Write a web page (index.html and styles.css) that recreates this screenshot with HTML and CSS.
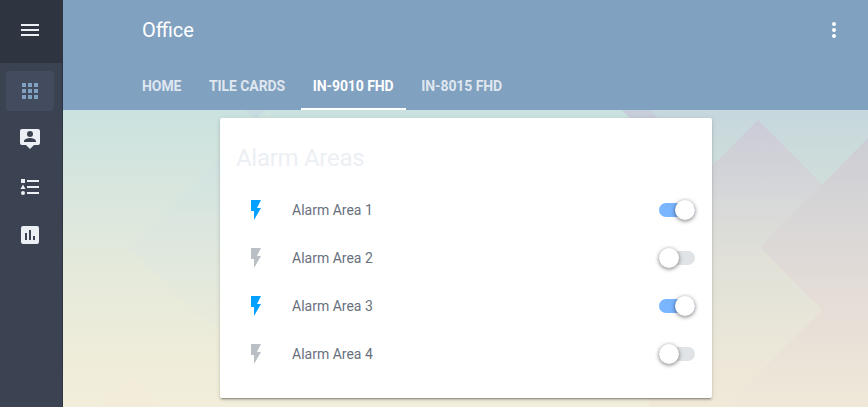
FILE: index.html
```html
<!DOCTYPE html>
<html lang="en">
<head>
<meta charset="utf-8">
<title>Office</title>
<link rel="stylesheet" href="styles.css">
</head>
<body>
<div class="app">
  <nav class="sidebar">
    <div class="menu"><svg class="icon" viewBox="0 0 24 24"><path d="M3 6h18v2H3zm0 5h18v2H3zm0 5h18v2H3z"/></svg></div>
    <div class="links">
      <a class="link selected"><svg class="icon" viewBox="0 0 24 24"><path d="M4 4h4v4H4zm6 0h4v4h-4zm6 0h4v4h-4zM4 10h4v4H4zm6 0h4v4h-4zm6 0h4v4h-4zM4 16h4v4H4zm6 0h4v4h-4zm6 0h4v4h-4z"/></svg></a>
      <a class="link"><svg class="icon" viewBox="0 0 24 24"><path d="M4 2h16a2 2 0 0 1 2 2v12a2 2 0 0 1-2 2h-4l-4 4-4-4H4a2 2 0 0 1-2-2V4c0-1.100.9-2 2-2m14 13v-1c0-2-4-3.100-6-3.100S6 12 6 14v1h12M12 4a3 3 0 0 0-3 3 3 3 0 0 0 3 3 3 3 0 0 0 3-3 3 3 0 0 0-3-3z"/></svg></a>
      <a class="link"><svg class="icon" viewBox="0 0 24 24"><path d="M5 9.500 7.500 14h-5L5 9.500M3 4h4v4H3V4m2 16a2 2 0 1 0 0-4 2 2 0 0 0 0 4M9 5v2h12V5H9m0 14h12v-2H9v2m0-6h12v-2H9v2z"/></svg></a>
      <a class="link"><svg class="icon" viewBox="0 0 24 24"><path d="M17 17h-2v-4h2m-4 4h-2V7h2M9 17H7v-7h2m10-7H5a2 2 0 0 0-2 2v14a2 2 0 0 0 2 2h14a2 2 0 0 0 2-2V5a2 2 0 0 0-2-2z"/></svg></a>
    </div>
  </nav>
  <div class="main">
    <header class="header">
      <div class="toolbar">
        <h1 class="title">Office</h1>
        <svg class="icon" viewBox="0 0 24 24"><path d="M12 8a2 2 0 1 0 0-4 2 2 0 0 0 0 4m0 2a2 2 0 1 0 0 4 2 2 0 0 0 0-4m0 6a2 2 0 1 0 0 4 2 2 0 0 0 0-4z"/></svg>
      </div>
      <div class="tabs">
        <span class="tab">HOME</span>
        <span class="tab">TILE CARDS</span>
        <span class="tab active">IN-9010 FHD</span>
        <span class="tab">IN-8015 FHD</span>
      </div>
    </header>
    <main class="view">
      <svg class="backdrop" viewBox="63 110 805 297" preserveAspectRatio="none">
        <defs>
          <linearGradient id="sky" gradientUnits="userSpaceOnUse" x1="0" y1="110" x2="0" y2="407">
            <stop offset="0" stop-color="#cae2df"/><stop offset=".26" stop-color="#d8e6de"/><stop offset=".55" stop-color="#e5eadb"/><stop offset=".8" stop-color="#eeecda"/><stop offset="1" stop-color="#f2eeda"/>
          </linearGradient>
          <linearGradient id="peak" gradientUnits="userSpaceOnUse" x1="0" y1="120" x2="0" y2="407">
            <stop offset="0" stop-color="#cacbd7"/><stop offset=".28" stop-color="#d7d8d9"/><stop offset=".5" stop-color="#e1e1d8"/><stop offset=".74" stop-color="#e9e6d9"/><stop offset="1" stop-color="#f1e9d8"/>
          </linearGradient>
          <linearGradient id="far" gradientUnits="userSpaceOnUse" x1="0" y1="110" x2="0" y2="190">
            <stop offset="0" stop-color="#c6d7dd"/><stop offset="1" stop-color="#d1dfda"/>
          </linearGradient>
          <linearGradient id="ridge" gradientUnits="userSpaceOnUse" x1="0" y1="138" x2="0" y2="407">
            <stop offset="0" stop-color="#cccdd5"/><stop offset=".3" stop-color="#d8d6d6"/><stop offset=".6" stop-color="#e5ddd7"/><stop offset="1" stop-color="#f0e8d8"/>
          </linearGradient>
          <linearGradient id="haze" gradientUnits="userSpaceOnUse" x1="0" y1="158" x2="0" y2="325">
            <stop offset="0" stop-color="#d0e3e1"/><stop offset=".5" stop-color="#dee7de"/><stop offset="1" stop-color="#e9ebdb"/>
          </linearGradient>
        </defs>
        <path fill="url(#sky)" d="M63 110h805v297H63z"/>
        <path fill="url(#haze)" d="M270 110 130 248l78 77h82z"/>
        <path fill="#c8dbe0" d="M245 110h20l-10 9z"/>
        <path fill="url(#far)" d="M622 110h246v120H740z"/>
        <path fill="#c7cddb" d="M622 110h28l20 20h-28z"/>
        <path fill="url(#peak)" d="M758 120 868 230v177H650V228z"/>
        <path fill="url(#ridge)" d="M868 138 760 247l62 63-97 97h143z"/>
        <path fill="#f4ecda" d="m130 376-31 31h62z"/>
      </svg>
      <section class="card">
        <h2 class="card-title">Alarm Areas</h2>
        <div class="row"><svg class="icon bolt on" viewBox="0 0 24 24"><path d="M7 2v11h3v9l7-12h-4l4-8H7z"/></svg><span class="name">Alarm Area 1</span><span class="switch on"></span></div>
        <div class="row"><svg class="icon bolt" viewBox="0 0 24 24"><path d="M7 2v11h3v9l7-12h-4l4-8H7z"/></svg><span class="name">Alarm Area 2</span><span class="switch"></span></div>
        <div class="row"><svg class="icon bolt on" viewBox="0 0 24 24"><path d="M7 2v11h3v9l7-12h-4l4-8H7z"/></svg><span class="name">Alarm Area 3</span><span class="switch on"></span></div>
        <div class="row"><svg class="icon bolt" viewBox="0 0 24 24"><path d="M7 2v11h3v9l7-12h-4l4-8H7z"/></svg><span class="name">Alarm Area 4</span><span class="switch"></span></div>
      </section>
    </main>
  </div>
</div>
</body>
</html>
```
FILE: styles.css
```css
* { box-sizing: border-box; }
body { margin: 0; font-family: Roboto, "Liberation Sans", sans-serif; overflow: hidden; }
.app { display: flex; height: 407px; }
.icon { display: block; width: 24px; height: 24px; fill: currentColor; flex: none; }

.sidebar { width: 63px; flex: none; background: #3b4252; border-right: 1px solid #2e3440; color: #eceff4; }
.menu { height: 63px; padding: 18px; background: #2e3440; }
.links { display: flex; flex-direction: column; gap: 8px; padding: 8px 6px; }
.link { display: flex; align-items: center; justify-content: center; width: 48px; height: 40px; border-radius: 4px; }
.selected { background: #434c5e; color: #81a1c1; }

.main { flex: 1; display: flex; flex-direction: column; }
.header { height: 110px; background: #81a1c1; color: #fff; }
.toolbar { display: flex; align-items: center; justify-content: space-between; height: 62px; padding: 0 22px 2px 79px; }
.title { margin: 0; font-size: 20px; font-weight: 400; line-height: 24px; }
.tabs { display: flex; height: 48px; padding-left: 67px; }
.tab { padding: 0 12px; margin-right: 3.6px; font-size: 14px; font-weight: 700; line-height: 48px; letter-spacing: -.08px; color: rgba(255, 255, 255, .76); white-space: nowrap; }
.active { color: #fff; border-bottom: 2px solid #fff; }

.view { position: relative; flex: 1; padding: 8px 0 0 157px; }
.backdrop { position: absolute; inset: 0; width: 100%; height: 100%; }
.card { position: relative; width: 492px; height: 280px; padding: 20px 16px 0; background: #fff; border-radius: 2px; box-shadow: 0 2px 2px rgba(0, 0, 0, .14), 0 1px 5px rgba(0, 0, 0, .12), 0 3px 1px -2px rgba(0, 0, 0, .2); }
.card-title { margin: 0 0 8px; font-size: 24px; font-weight: 400; line-height: 40px; letter-spacing: -.288px; color: #eceff4; }
.row { display: flex; align-items: center; height: 48px; }
.bolt { margin: 0 24px 0 8px; color: #b9bfc5; }
.bolt.on { color: #03a0ff; }
.name { flex: 1; font-size: 14px; color: #68707e; }
.switch { position: relative; width: 36px; height: 14px; margin-right: 1px; border-radius: 7px; background: #e1e4e6; }
.switch::after { content: ""; position: absolute; top: -3px; left: 0; width: 20px; height: 20px; border-radius: 50%; background: #fff; box-shadow: 0 1px 4px rgba(0, 0, 0, .55); }
.switch.on { background: #7ab5ff; }
.switch.on::after { left: 16px; }
```
